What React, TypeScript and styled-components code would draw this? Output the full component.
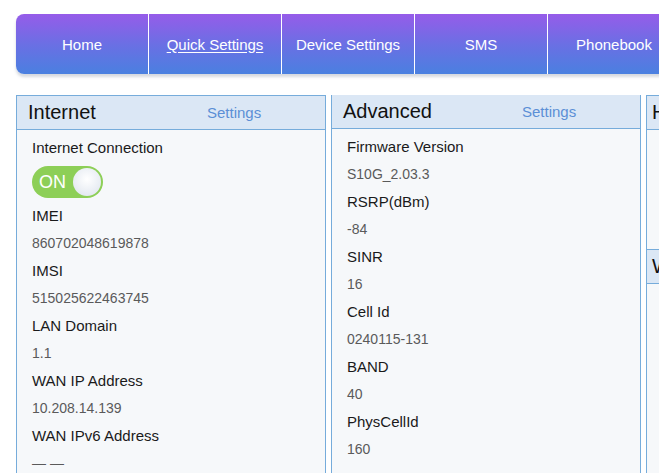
import styled, { createGlobalStyle } from 'styled-components';

const GlobalStyle = createGlobalStyle`
  html, body {
    margin: 0;
    padding: 0;
    background: #ffffff;
    overflow: hidden;
    font-family: "Liberation Sans", Arial, sans-serif;
  }
`;

const tabs = ['Home', 'Quick Settings', 'Device Settings', 'SMS', 'Phonebook'];

const internetRows = [
  { label: 'IMEI', value: '860702048619878' },
  { label: 'IMSI', value: '515025622463745' },
  { label: 'LAN Domain', value: '1.1' },
  { label: 'WAN IP Address', value: '10.208.14.139' },
  { label: 'WAN IPv6 Address', value: '— —' },
];

const advancedRows = [
  { label: 'Firmware Version', value: 'S10G_2.03.3' },
  { label: 'RSRP(dBm)', value: '-84' },
  { label: 'SINR', value: '16' },
  { label: 'Cell Id', value: '0240115-131' },
  { label: 'BAND', value: '40' },
  { label: 'PhysCellId', value: '160' },
];

const App = () => {
  return (
    <>
      <GlobalStyle />
      <Page>
        <NavBar>
          {tabs.map((t, i) => (
            <Tab key={t} $active={i === 1}>{t}</Tab>
          ))}
        </NavBar>
        <Columns>
          <Panel>
            <PanelHeader>
              <Title>Internet</Title>
              <HeaderLink>Settings</HeaderLink>
            </PanelHeader>
            <PanelBody $height={420}>
              <Label>Internet Connection</Label>
              <ToggleRow>
                <Toggle>
                  <span>ON</span>
                  <Knob />
                </Toggle>
              </ToggleRow>
              {internetRows.map((r) => (
                <div key={r.label}>
                  <Label>{r.label}</Label>
                  <Value>{r.value}</Value>
                </div>
              ))}
            </PanelBody>
          </Panel>
          <Panel>
            <PanelHeader>
              <Title>Advanced</Title>
              <HeaderLink>Settings</HeaderLink>
            </PanelHeader>
            <PanelBody $height={420}>
              {advancedRows.map((r) => (
                <div key={r.label}>
                  <Label>{r.label}</Label>
                  <Value>{r.value}</Value>
                </div>
              ))}
            </PanelBody>
          </Panel>
          <Stack>
            <Panel>
              <PanelHeader $tight>
                <Title>Home Network</Title>
              </PanelHeader>
              <PanelBody $height={119} />
            </Panel>
            <Panel>
              <PanelHeader $tight>
                <Title>WiFi</Title>
              </PanelHeader>
              <PanelBody $height={200} />
            </Panel>
          </Stack>
        </Columns>
      </Page>
    </>
  );
};

const Page = styled.div`
  padding: 14px 0 0 16px;
  width: 900px;
`;

const NavBar = styled.div`
  display: flex;
  height: 60px;
  border-radius: 8px 0 0 8px;
  background: linear-gradient(to bottom, #965ce9 0%, #6b6fe4 50%, #4a80e0 100%);
  box-shadow: 0 3px 3px rgba(120, 130, 150, 0.3);
  overflow: hidden;
`;

const Tab = styled.div<{ $active?: boolean }>`
  box-sizing: border-box;
  width: 133px;
  flex-shrink: 0;
  border-right: 1px solid #ffffff;
  display: flex;
  align-items: center;
  justify-content: center;
  color: #ffffff;
  font-size: 15px;
  text-decoration: ${(p) => (p.$active ? 'underline' : 'none')};
  text-underline-offset: 2px;
`;

const Columns = styled.div`
  display: grid;
  grid-template-columns: 310px 310px 310px;
  gap: 5px;
  margin-top: 21px;
  align-items: start;
`;

const Stack = styled.div`
  display: flex;
  flex-direction: column;
`;

const Panel = styled.div`
  box-sizing: border-box;
  border: 1px solid #76acdb;
  background: #f6f8fa;
  & + & {
    border-top: none;
  }
`;

const PanelHeader = styled.div<{ $tight?: boolean }>`
  box-sizing: border-box;
  height: 34px;
  display: grid;
  grid-template-columns: 179px auto;
  align-items: center;
  padding-left: ${(p) => (p.$tight ? '5px' : '11px')};
  background: #dbe7f5;
  border-bottom: 1px solid #76acdb;
  white-space: nowrap;
  overflow: hidden;
`;

const Title = styled.div`
  font-size: 20px;
  color: #111111;
`;

const HeaderLink = styled.div`
  font-size: 15px;
  color: #5b8fd6;
`;

const PanelBody = styled.div<{ $height: number }>`
  box-sizing: border-box;
  padding: 4px 15px 0;
  height: ${(p) => p.$height}px;
`;

const Label = styled.div`
  font-size: 15px;
  line-height: 27px;
  color: #1a1a1a;
`;

const Value = styled.div`
  font-size: 14px;
  line-height: 28px;
  color: #5a5a5a;
`;

const ToggleRow = styled.div`
  padding: 5px 0 4px;
`;

const Toggle = styled.div`
  box-sizing: border-box;
  width: 71px;
  height: 32px;
  border-radius: 16px;
  background: #8dcf57;
  display: flex;
  align-items: center;
  justify-content: space-between;
  padding: 0 2px 0 7px;
  span {
    color: #ffffff;
    font-size: 18px;
  }
`;

const Knob = styled.div`
  width: 28px;
  height: 28px;
  border-radius: 50%;
  background: radial-gradient(circle at 50% 40%, #ffffff 0%, #e6ebf2 70%, #d6dde8 100%);
`;

export default App;
